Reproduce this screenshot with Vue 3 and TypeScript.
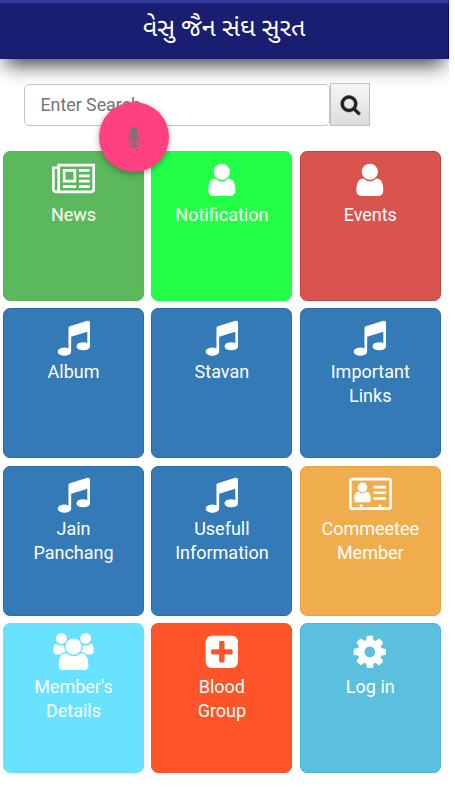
<script setup lang="ts">
interface Tile {
  label: string
  icon: string
  color: string
  border: string
}

const wide = '0 0 2048 1792'
const square = '0 0 1792 1792'

const icons: Record<string, { box: string; d: string }> = {
  news: {
    box: wide,
    d: 'M1024 512h-384v384h384v-384zm128 640v128h-640v-128h640zm0-768v640h-640v-640h640zm640 768v128h-512v-128h512zm0-256v128h-512v-128h512zm0-256v128h-512v-128h512zm0-256v128h-512v-128h512zm-1536 960v-960h-128v960q0 26 19 45t45 19 45-19 19-45zm1664 0v-1088h-1536v1088q0 33-11 64h1483q26 0 45-19t19-45zm128-1216v1216q0 80-56 136t-136 56h-1664q-80 0-136-56t-56-136v-1088h256v-128h1792z',
  },
  user: {
    box: square,
    d: 'M1536 1399q0 109-62.5 187t-150.5 78h-854q-88 0-150.5-78t-62.5-187q0-85 8.5-160.5t31.5-152 58.5-131 94-89 134.5-34.5q131 128 313 128t313-128q76 0 134.5 34.5t94 89 58.5 131 31.5 152 8.5 160.5zm-256-887q0 159-112.5 271.5t-271.5 112.5-271.5-112.5-112.5-271.5 112.5-271.5 271.5-112.5 271.5 112.5 112.5 271.5z',
  },
  music: {
    box: square,
    d: 'M1664 224v1120q0 50-34 89t-86 60.5-103.5 32-96.5 10.5-96.5-10.5-103.5-32-86-60.5-34-89 34-89 86-60.5 103.5-32 96.5-10.5q105 0 192 39v-537l-768 237v709q0 50-34 89t-86 60.5-103.5 32-96.5 10.5-96.5-10.5-103.5-32-86-60.5-34-89 34-89 86-60.5 103.5-32 96.5-10.5q105 0 192 39v-967q0-31 19-56.5t49-35.5l832-256q12-4 28-4 40 0 68 28t28 68z',
  },
  card: {
    box: wide,
    d: 'M160 128h1728q66 0 113 47t47 113v1216q0 66-47 113t-113 47h-1728q-66 0-113-47t-47-113v-1216q0-66 47-113t113-47zm0 128q-32 0-32 32v1216q0 32 32 32h352v-128h128v128h768v-128h128v128h352q32 0 32-32v-1216q0-32-32-32zM1160 512h600v128h-600zM1160 780h600v128h-600zM1160 1048h600v128h-600zM640 358a232 232 0 0 1 0 464a232 232 0 0 1 0-464zM450 790q80 82 190 82t190-82q203 20 203 361q0 150-130 150h-526q-130 0-130-150q0-341 203-361z',
  },
  users: {
    box: wide,
    d: 'M657 896q-162 5-265 128h-134q-82 0-138-40.5t-56-118.5q0-353 124-353 6 0 43.5 21t97.5 42.5 119 21.5q67 0 133-23-5 37-5 66 0 139 81 256zm1071 637q0 120-73 189.5t-194 69.5h-874q-121 0-194-69.5t-73-189.5q0-53 3.5-103.5t14-109 26.5-108.5 43-97.5 62-81 85.5-53.5 111.5-20q10 0 43 21.5t73 48 107 48 135 21.5 135-21.5 107-48 73-48 43-21.5q61 0 111.5 20t85.5 53.5 62 81 43 97.5 26.5 108.5 14 109 3.5 103.5zm-1024-1277q0 106-75 181t-181 75-181-75-75-181 75-181 181-75 181 75 75 181zm704 384q0 159-112.5 271.5t-271.5 112.5-271.5-112.5-112.5-271.5 112.5-271.5 271.5-112.5 271.5 112.5 112.5 271.5zm576 225q0 78-56 118.5t-138 40.5h-134q-103-123-265-128 81-117 81-256 0-29-5-66 66 23 133 23 59 0 119-21.5t97.5-42.5 43.5-21q124 0 124 353zm-128-609q0 106-75 181t-181 75-181-75-75-181 75-181 181-75 181 75 75 181z',
  },
  plus: {
    box: square,
    d: 'M416 128h960q119 0 203.500 84.500t84.500 203.500v960q0 119-84.500 203.500t-203.500 84.500h-960q-119 0-203.500-84.500t-84.500-203.500v-960q0-119 84.500-203.500t203.500-84.500zM832 384q-64 0-64 64v320h-320q-64 0-64 64v128q0 64 64 64h320v320q0 64 64 64h128q64 0 64-64v-320h320q64 0 64-64v-128q0-64-64-64h-320v-320q0-64-64-64z',
  },
  cog: {
    box: square,
    d: 'M1152 896q0-106-75-181t-181-75-181 75-75 181 75 181 181 75 181-75 75-181zm512-109v222q0 12-8 23t-20 13l-185 28q-19 54-39 91 35 50 107 138 10 12 10 25t-9 23q-27 37-99 108t-94 71q-12 0-26-9l-138-108q-44 23-91 38-16 136-29 186-7 28-36 28h-222q-14 0-24.500-8.500t-11.500-21.500l-28-184q-49-16-90-37l-141 107q-10 9-25 9-14 0-25-11-126-114-165-168-7-10-7-23 0-12 8-23 15-21 51-66.500t54-70.500q-27-50-41-99l-183-27q-13-2-21-12.500t-8-23.500v-222q0-12 8-23t19-13l186-28q14-46 39-92-40-57-107-138-10-12-10-24 0-10 9-23 26-36 98.500-107.500t94.500-71.500q13 0 26 10l138 107q44-23 91-38 16-136 29-186 7-28 36-28h222q14 0 24.500 8.500t11.500 21.500l28 184q49 16 90 37l142-107q9-9 24-9 13 0 25 10 129 119 165 170 7 8 7 22 0 12-8 23-15 21-51 66.500t-54 70.500q26 50 41 98l183 28q13 2 21 12.500t8 23.500z',
  },
}

const tiles: Tile[] = [
  { label: 'News', icon: 'news', color: '#5cb85c', border: '#58b358' },
  { label: 'Notification', icon: 'user', color: '#23ff47', border: '#23fb47' },
  { label: 'Events', icon: 'user', color: '#d9534f', border: '#c5403c' },
  { label: 'Album', icon: 'music', color: '#337ab7', border: '#2c6da6' },
  { label: 'Stavan', icon: 'music', color: '#337ab7', border: '#2c6da6' },
  { label: 'Important\nLinks', icon: 'music', color: '#337ab7', border: '#2c6da6' },
  { label: 'Jain\nPanchang', icon: 'music', color: '#337ab7', border: '#2c6da6' },
  { label: 'Usefull\nInformation', icon: 'music', color: '#337ab7', border: '#2c6da6' },
  { label: 'Commeetee\nMember', icon: 'card', color: '#f0ad4e', border: '#e9a445' },
  { label: "Member's\nDetails", icon: 'users', color: '#69e2ff', border: '#69e2ff' },
  { label: 'Blood\nGroup', icon: 'plus', color: '#ff5328', border: '#f9512a' },
  { label: 'Log in', icon: 'cog', color: '#5bc0de', border: '#4cb4d4' },
]
</script>

<template>
  <div class="screen">
    <header class="bar">
      <h1 class="title">વેસુ જૈન સંઘ સુરત</h1>
    </header>

    <form class="search" @submit.prevent>
      <input class="field" type="text" placeholder="Enter Search" />
      <button class="go" type="submit" aria-label="Search">
        <svg class="go-icon" viewBox="0 0 1792 1792">
          <path d="M1216 832q0-185-131.500-316.500t-316.500-131.500-316.500 131.500-131.500 316.500 131.500 316.500 316.500 131.500 316.500-131.500 131.500-316.500zm512 832q0 52-38 90t-90 38q-54 0-90-38l-343-342q-179 124-399 124-143 0-273.500-55.500t-225-150-150-225-55.500-273.500 55.500-273.500 150-225 225-150 273.500-55.500 273.500 55.500 225 150 150 225 55.500 273.500q0 220-124 399l343 343q37 37 37 90z" />
        </svg>
      </button>
    </form>

    <main class="grid">
      <a
        v-for="tile in tiles"
        :key="tile.label"
        class="tile"
        :style="{ backgroundColor: tile.color, borderColor: tile.border }"
      >
        <svg class="icon" :viewBox="icons[tile.icon].box">
          <path fill-rule="evenodd" :d="icons[tile.icon].d" />
        </svg>
        <span class="label">{{ tile.label }}</span>
      </a>
    </main>

    <button class="mic" type="button" aria-label="Voice search">
      <svg class="mic-icon" viewBox="0 0 12 21">
        <rect x="2.800" y="0" width="6.400" height="13.500" rx="1.200" />
        <path d="M0.700 8v4.200q0 3.600 5.300 3.600t5.300-3.600v-4.200" class="mic-arc" />
        <path d="M4.800 15.500h2.400v2.500h3.600v2.200h-9.600v-2.200h3.600z" />
      </svg>
    </button>
  </div>
</template>

<style>
body {
  background: #fff;
}
</style>

<style scoped>
.screen {
  position: relative;
  width: 449px;
  height: 800px;
  overflow: hidden;
  background: #fff;
  font-family: Roboto, "Noto Sans", sans-serif;
}

.bar {
  box-sizing: border-box;
  height: 59px;
  display: flex;
  align-items: flex-start;
  justify-content: center;
  padding-top: 9px;
  border-top: 3px solid #303b9c;
  border-right: 1px solid #0a0a98;
  background: #191e70;
  box-shadow: 0 11px 20px -5px rgba(0, 0, 0, 0.75);
}

.title {
  margin: 0;
  color: #fff;
  font-family: Roboto, "Noto Sans Gujarati", "Noto Sans", sans-serif;
  font-size: 25.200px;
  font-weight: 400;
  line-height: 32px;
  white-space: nowrap;
}

.search {
  display: flex;
  align-items: flex-end;
  margin: 24px 0 0 24px;
}

.field {
  box-sizing: border-box;
  width: 306px;
  height: 42px;
  padding: 0 15.500px 2px;
  border: 1px solid #c4c4c4;
  border-radius: 5px;
  background: #fff;
  font-family: inherit;
  font-size: 17.800px;
  outline: none;
}

.field::placeholder {
  color: #757575;
  opacity: 1;
}

.go {
  box-sizing: border-box;
  display: flex;
  align-items: center;
  justify-content: center;
  width: 40px;
  height: 43px;
  padding: 0;
  border: 1px solid #c0c0c0;
  border-radius: 0;
  background: linear-gradient(#f6f6f6, #dcdcdc);
}

.go-icon {
  width: 21px;
  height: 21px;
  fill: #222;
  stroke: #222;
  stroke-width: 40;
  overflow: visible;
}

.grid {
  display: grid;
  grid-template-columns: repeat(3, 141px);
  grid-auto-rows: 150px;
  gap: 7.400px;
  padding: 25px 0 0 3px;
}

.tile {
  box-sizing: border-box;
  display: flex;
  flex-direction: column;
  align-items: center;
  padding: 8.500px 12px 0;
  border: 1px solid;
  border-radius: 7px;
  color: #fff;
  text-align: center;
}

.icon {
  height: 37.700px;
  fill: #fff;
}

.label {
  margin-top: 4.500px;
  font-size: 18px;
  line-height: 24px;
  white-space: pre-line;
}

.mic {
  position: absolute;
  top: 102px;
  left: 99px;
  display: flex;
  align-items: center;
  justify-content: center;
  width: 70px;
  height: 70px;
  padding: 0;
  border: 0;
  border-radius: 50%;
  background: #ff4081;
  box-shadow: 0 2px 6px rgba(0, 0, 0, 0.35);
}

.mic-icon {
  width: 12px;
  height: 21px;
  fill: #757575;
}

.mic-arc {
  fill: none;
  stroke: #757575;
  stroke-width: 1.100;
}
</style>
